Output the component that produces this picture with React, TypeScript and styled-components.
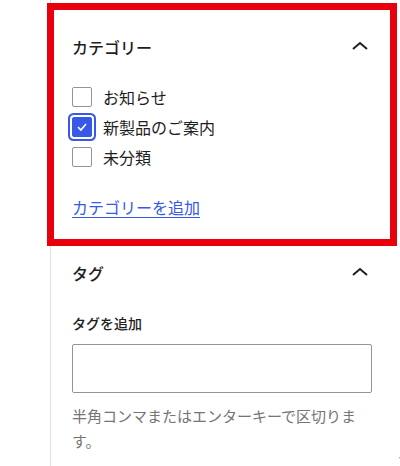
import React from 'react';
import styled, { createGlobalStyle } from 'styled-components';

const GlobalStyle = createGlobalStyle`
  html, body {
    margin: 0;
    padding: 0;
    background: #ffffff;
  }
  body {
    font-family: "Noto Sans CJK JP", "Noto Sans", sans-serif;
    color: #1e1e1e;
  }
`;

const Page = styled.div`
  display: flex;
  width: 400px;
  height: 466px;
  overflow: hidden;
`;

const Gutter = styled.div`
  width: 50px;
  flex-shrink: 0;
`;

const Panel = styled.div`
  flex: 1;
  border-left: 1px solid #e0e0e0;
  display: flex;
  flex-direction: column;
`;

const Scrollbar = styled.div`
  width: 4px;
  flex-shrink: 0;
  display: flex;
  flex-direction: column;
  justify-content: space-between;
  align-items: center;
  padding-bottom: 4px;

  .thumb {
    width: 4px;
    height: 446px;
    background: #919191;
  }
  .arrow {
    width: 0;
    height: 0;
    border-left: 3px solid transparent;
    border-right: 3px solid transparent;
    border-top: 5px solid #8a8a8a;
  }
`;

const Highlight = styled.section`
  margin: 3px 3px 0 -4px;
  border: 7px solid #e8000c;
  padding: 26px 18px 20px 18px;
`;

const Section = styled.section`
  padding: 16px 28px 0 21px;
`;

const Header = styled.div`
  display: flex;
  align-items: center;
  justify-content: space-between;
  height: 22px;

  h2 {
    margin: 0;
    font-size: 16px;
    font-weight: 500;
    line-height: 22px;
  }
`;

const Chevron = styled.svg`
  width: 24px;
  height: 24px;
  margin-top: -2px;
`;

const List = styled.ul`
  list-style: none;
  margin: 24px 0 0 0;
  padding: 0;
`;

const Row = styled.li`
  display: flex;
  align-items: center;
  gap: 11px;
  height: 30px;
  font-size: 16px;
`;

const Box = styled.span<{ $checked?: boolean }>`
  width: 20px;
  height: 20px;
  box-sizing: border-box;
  border-radius: 2px;
  border: 1px solid ${(p) => (p.$checked ? '#3858e9' : '#949494')};
  background: ${(p) => (p.$checked ? '#3858e9' : '#fff')};
  box-shadow: ${(p) => (p.$checked ? '0 0 0 2px #fff, 0 0 0 4px #3858e9' : 'none')};
  display: flex;
  align-items: center;
  justify-content: center;
  flex-shrink: 0;
`;

const AddLink = styled.a`
  display: inline-block;
  margin-top: 24px;
  font-size: 16px;
  line-height: 22px;
  color: #3858e9;
  text-decoration: underline;
  text-underline-offset: 3px;
`;

const Label = styled.div`
  margin-top: 29px;
  font-size: 14px;
  font-weight: 500;
  line-height: 20px;
`;

const Input = styled.div`
  margin-top: 11px;
  width: 300px;
  height: 49px;
  box-sizing: border-box;
  border: 1px solid #949494;
  border-radius: 2px;
`;

const Help = styled.p`
  margin: 10px 0 0 0;
  width: 296px;
  font-size: 15px;
  line-height: 25px;
  color: #757575;
`;

const ChevronUp = () => (
  <Chevron viewBox="0 0 24 24">
    <path d="M5 15 L12 9 L19 15" fill="none" stroke="#1e1e1e" strokeWidth="2" />
  </Chevron>
);

const Check = () => (
  <svg width="14" height="14" viewBox="0 0 14 14">
    <path d="M3 7.2 L5.9 10 L11 4" fill="none" stroke="#fff" strokeWidth="1.6" />
  </svg>
);

const categories = [
  { name: 'お知らせ', checked: false },
  { name: '新製品のご案内', checked: true },
  { name: '未分類', checked: false },
];

const App = () => {
  return (
    <Page>
      <GlobalStyle />
      <Gutter />
      <Panel>
        <Highlight>
          <Header>
            <h2>カテゴリー</h2>
            <ChevronUp />
          </Header>
          <List>
            {categories.map((c) => (
              <Row key={c.name}>
                <Box $checked={c.checked}>{c.checked && <Check />}</Box>
                {c.name}
              </Row>
            ))}
          </List>
          <AddLink>カテゴリーを追加</AddLink>
        </Highlight>
        <Section>
          <Header>
            <h2>タグ</h2>
            <ChevronUp />
          </Header>
          <Label>タグを追加</Label>
          <Input />
          <Help>半角コンマまたはエンターキーで区切ります。</Help>
        </Section>
      </Panel>
      <Scrollbar>
        <div className="thumb" />
        <div className="arrow" />
      </Scrollbar>
    </Page>
  );
};

export default App;
